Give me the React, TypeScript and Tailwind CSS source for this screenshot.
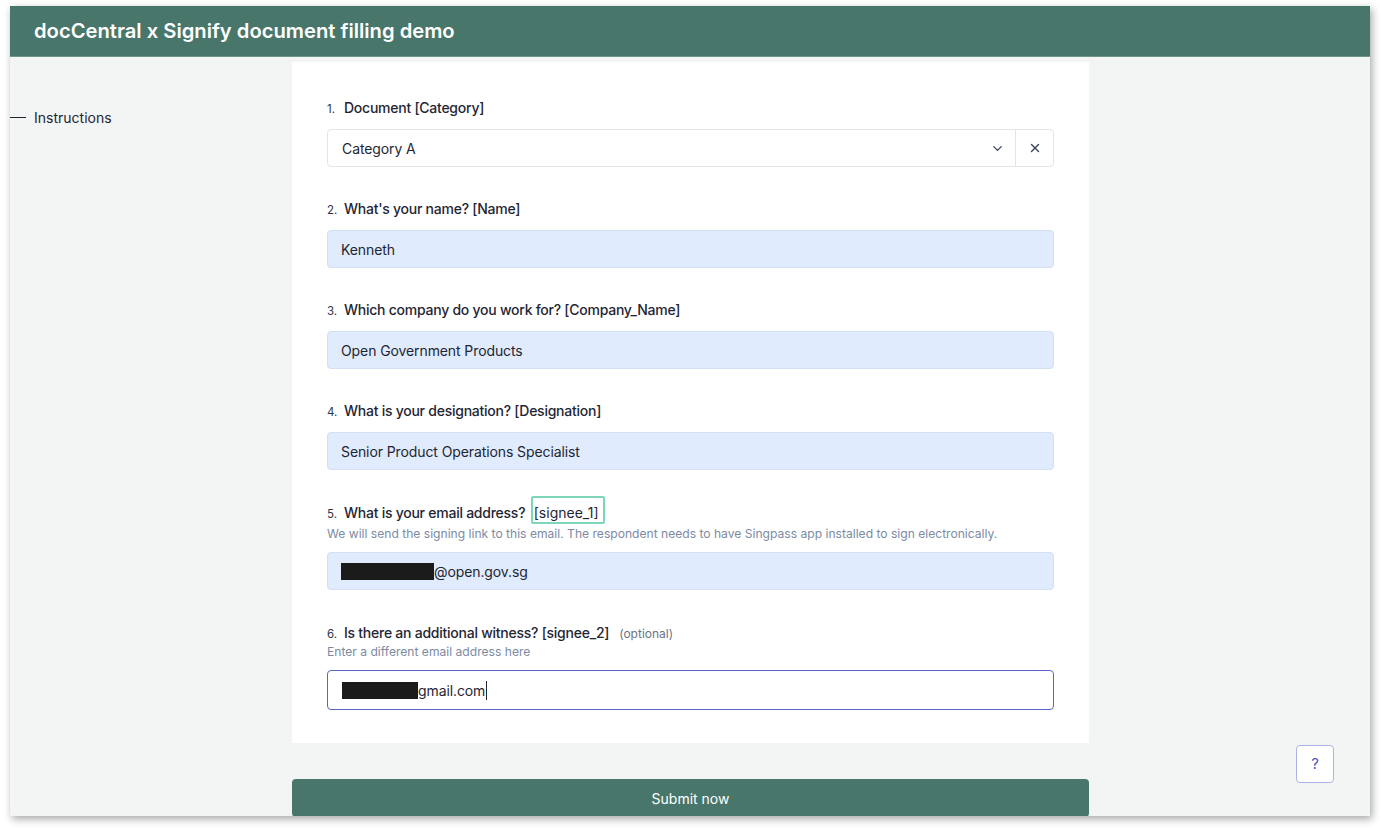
import { ChevronDown, X } from "lucide-react";

type Field = {
  n: number;
  label: string;
  value: string;
};

const filled: Field[] = [
  { n: 2, label: "What's your name? [Name]", value: "Kenneth" },
  { n: 3, label: "Which company do you work for? [Company_Name]", value: "Open Government Products" },
  { n: 4, label: "What is your designation? [Designation]", value: "Senior Product Operations Specialist" },
];

function Label({ n, children }: { n: number; children: React.ReactNode }) {
  return (
    <div className="flex items-baseline h-5 text-[#1f2633]">
      <span className="text-[11.5px] leading-5 w-[17px] text-[#2f3746]">{n}.</span>
      <span className="text-[14px] leading-5 font-medium tracking-[-0.25px]">{children}</span>
    </div>
  );
}

function FilledInput({ children }: { children: React.ReactNode }) {
  return (
    <div className="h-[38px] rounded-[4px] border border-[#d3dff3] bg-[#e0ebfd] px-[13px] flex items-center text-[14px] tracking-[-0.1px] text-[#1f2633]">
      {children}
    </div>
  );
}

export default function App() {
  return (
    <div className="w-[1380px] h-[830px] bg-white pl-[10px] pt-[6px]" style={{ fontFamily: "Inter, 'Noto Sans', sans-serif" }}>
      <div className="w-[1360px] h-[810px] overflow-hidden bg-[#f3f4f4] shadow-[2px_3px_8px_rgba(0,0,0,0.35)] flex flex-col">
        <div className="h-[51px] shrink-0 bg-[#48766a] border-b border-[#6f948a] flex items-center pl-6">
          <h1 className="text-white text-[20.2px] font-semibold">docCentral x Signify document filling demo</h1>
        </div>
        <div className="flex pt-[5px] relative">
          <div className="w-[282px] shrink-0 pt-[45px]">
            <div className="flex items-center gap-2 text-[14px] text-[#1f2633]">
              <span className="block w-4 h-[1.5px] bg-[#1f2633]" />
              <span>Instructions</span>
            </div>
          </div>
          <div className="w-[797px] shrink-0 flex flex-col">
            <div className="bg-white px-[35px] pt-[36px] pb-[33px] flex flex-col gap-[32px]">
              <div className="flex flex-col gap-[11px]">
                <Label n={1}>Document [Category]</Label>
                <div className="h-[38px] rounded-[4px] border border-[#e2e5e9] bg-white flex text-[14px] tracking-[-0.1px] text-[#1f2633]">
                  <div className="flex-1 flex items-center pl-[14px] pr-[10px]">
                    <span className="flex-1">Category A</span>
                    <ChevronDown size={15} strokeWidth={2.2} className="text-[#3d4663]" />
                  </div>
                  <div className="w-[38px] border-l border-[#e2e5e9] flex items-center justify-center">
                    <X size={14} strokeWidth={2.4} className="text-[#3d4663]" />
                  </div>
                </div>
              </div>
              {filled.map((f) => (
                <div key={f.n} className="flex flex-col gap-[11px]">
                  <Label n={f.n}>{f.label}</Label>
                  <FilledInput>{f.value}</FilledInput>
                </div>
              ))}
              <div className="flex flex-col pt-[1px]">
                <Label n={5}>
                  What is your email address?{" "}
                  <span className="relative inline-block h-5 leading-5 ml-[5px] font-normal tracking-[0px]">
                    [signee_1]
                    <span className="absolute -left-[3px] -right-[6px] -top-[7px] -bottom-[1px] border-[2.5px] border-[#7ed6b8] rounded-[2px]" />
                  </span>
                </Label>
                <p className="text-[12.1px] leading-4 text-[#7d8aa3] mt-[3px]">
                  We will send the signing link to this email. The respondent needs to have Singpass app installed to sign electronically.
                </p>
                <div className="mt-[10px]">
                  <FilledInput>
                    <span className="inline-block w-[93px] h-[17px] bg-[#1b1b1b]" />
                    <span>@open.gov.sg</span>
                  </FilledInput>
                </div>
              </div>
              <div className="flex flex-col pt-[1px]">
                <div className="flex items-baseline">
                  <Label n={6}>Is there an additional witness? [signee_2]</Label>
                  <span className="ml-[10px] text-[12px] leading-5 text-[#6b7384]">(optional)</span>
                </div>
                <p className="text-[12.1px] leading-4 text-[#7d8aa3]">Enter a different email address here</p>
                <div className="mt-[10px] h-[40px] rounded-[4px] border-[1.5px] border-[#5a64c8] bg-white pl-[14px] flex items-center text-[14px] tracking-[-0.1px] text-[#1f2633]">
                  <span className="inline-block w-[76px] h-[17px] bg-[#1b1b1b]" />
                  <span>gmail.com</span>
                  <span className="inline-block w-px h-[19px] bg-[#1f2633] ml-px" />
                </div>
              </div>
            </div>
            <button className="mt-[36px] h-[38px] rounded-[4px] bg-[#48766a] text-white text-[14px]">Submit now</button>
          </div>
          <div className="flex-1 relative">
            <button className="absolute left-[207px] top-[683px] w-[38px] h-[38px] rounded-[4px] border border-[#a9b2e8] bg-white text-[#4b58bf] text-[15px]">
              ?
            </button>
          </div>
        </div>
      </div>
    </div>
  );
}
